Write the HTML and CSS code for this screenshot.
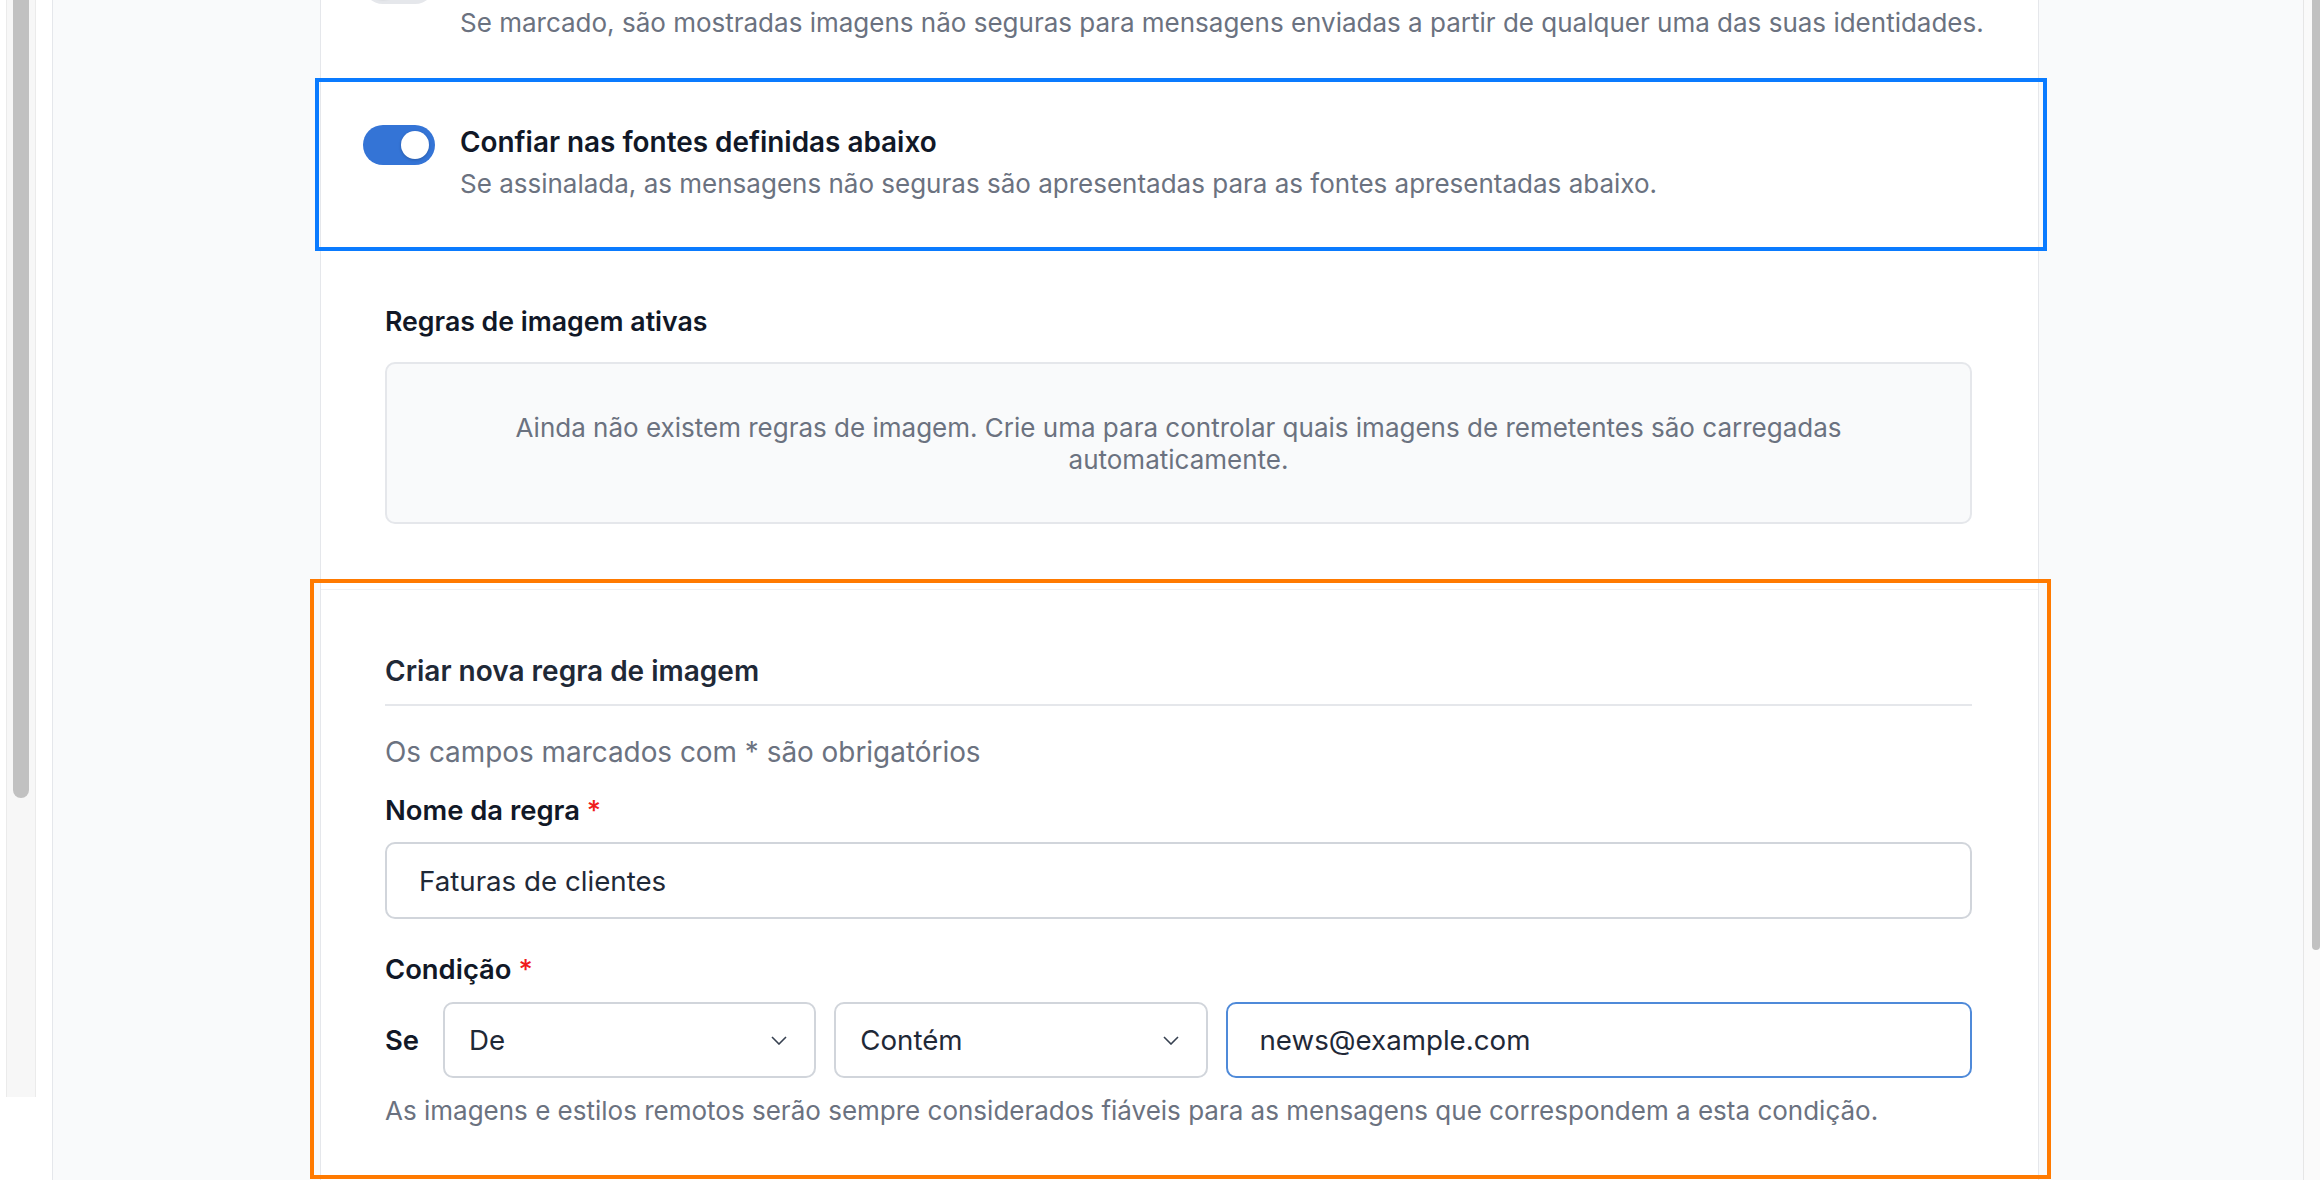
FILE: index.html
```html
<!DOCTYPE html>
<html lang="pt">
<head>
<meta charset="utf-8">
<title>Definições de imagens</title>
<link rel="stylesheet" href="styles.css">
</head>
<body>
<div class="screen">
  <div class="gutter"><div class="track"><div class="thumb"></div></div></div>
  <div class="sidebar"></div>
  <main class="panel">
    <div class="scroll">
      <section class="toggles">
        <div class="toggle-row">
          <span class="switch off"><span class="knob"></span></span>
          <div class="toggle-text">
            <div class="toggle-title">Confiar nas minhas identidades</div>
            <p class="toggle-desc">Se marcado, são mostradas imagens não seguras para mensagens enviadas a partir de qualquer uma das suas identidades.</p>
          </div>
        </div>
        <div class="toggle-row frame-blue">
          <span class="switch"><span class="knob"></span></span>
          <div class="toggle-text">
            <div class="toggle-title">Confiar nas fontes definidas abaixo</div>
            <p class="toggle-desc">Se assinalada, as mensagens não seguras são apresentadas para as fontes apresentadas abaixo.</p>
          </div>
        </div>
      </section>

      <section class="rules">
        <h2 class="section-title">Regras de imagem ativas</h2>
        <div class="empty">Ainda não existem regras de imagem. Crie uma para controlar quais imagens de remetentes são carregadas automaticamente.</div>
      </section>

      <section class="new-rule frame-orange">
        <h3 class="form-title">Criar nova regra de imagem</h3>
        <p class="required-note">Os campos marcados com * são obrigatórios</p>
        <div class="field-label">Nome da regra <span class="req">*</span></div>
        <div class="text-input">Faturas de clientes</div>
        <div class="field-label label-gap">Condição <span class="req">*</span></div>
        <div class="condition-row">
          <span class="cond-if">Se</span>
          <div class="select"><span>De</span><svg class="chev" viewBox="0 0 16 9" width="16" height="9"><path d="M1 1 L8 8 L15 1"/></svg></div>
          <div class="select"><span>Contém</span><svg class="chev" viewBox="0 0 16 9" width="16" height="9"><path d="M1 1 L8 8 L15 1"/></svg></div>
          <div class="text-input value-input">news@example.com</div>
        </div>
        <p class="helper">As imagens e estilos remotos serão sempre considerados fiáveis para as mensagens que correspondem a esta condição.</p>
      </section>
    </div>
  </main>
  <div class="aside"></div>
  <div class="vscroll"><div class="vthumb"></div></div>
</div>
</body>
</html>
```

FILE: styles.css
```css
* { box-sizing: border-box; margin: 0; padding: 0; }

body {
  width: 2320px;
  height: 1180px;
  overflow: hidden;
  background: #fff;
  font-family: Inter, "Noto Sans", sans-serif;
  color: #111827;
}

.screen { display: flex; height: 1180px; }

/* left window strip with its own scrollbar */
.gutter { width: 52px; flex: none; padding-left: 6px; }
.track {
  width: 30px;
  height: 1097px;
  background: #f7f7f7;
  border-left: 1px solid #ebebeb;
  border-right: 1px solid #ebebeb;
  overflow: hidden;
}
.thumb {
  width: 16px;
  height: 808px;
  margin: -10px auto 0;
  border-radius: 8px;
  background: #c1c1c1;
}

.sidebar {
  width: 268px;
  flex: none;
  border-left: 1px solid #e5e7eb;
  background: #f9fafb;
}

.panel {
  width: 1719px;
  flex: none;
  border-left: 1px solid #e5e7eb;
  border-right: 1px solid #e5e7eb;
  background: #fff;
}

.aside { width: 264px; flex: none; background: #f9fafb; }

.vscroll {
  flex: 1;
  border-left: 1px solid #e6e6e6;
  background: #fafafa;
  padding-left: 8px;
}
.vthumb {
  height: 960px;
  margin-top: -10px;
  border-radius: 0 0 6px 6px;
  background: #c1c1c1;
}

/* content is scrolled part way down */
.scroll { margin-top: -79px; }

/* toggle rows */
.toggle-row {
  display: flex;
  gap: 25px;
  padding: 42px;
  position: relative;
}
.toggle-row + .toggle-row { border-top: 1px solid #ebebeb; }

.switch {
  flex: none;
  width: 72px;
  height: 40px;
  margin-top: 1px;
  padding: 6px;
  border-radius: 20px;
  background: #3474d6;
  display: flex;
  justify-content: flex-end;
}
.switch.off { background: #e5e7eb; justify-content: flex-start; }
.knob {
  width: 28px;
  height: 28px;
  border-radius: 50%;
  background: #fff;
  box-shadow: 0 1px 3px rgba(0, 0, 0, 0.22);
}

.toggle-title { font-size: 27.9px; font-weight: 600; line-height: 36px; color: #111827; }
.toggle-desc { margin-top: 8px; font-size: 26px; line-height: 32px; color: #6b7280; }

/* annotation frames */
.frame-blue::after,
.frame-orange::after {
  content: "";
  position: absolute;
  pointer-events: none;
}
.frame-blue::after { top: -4px; left: -6px; right: -9px; bottom: -9px; border: 4px solid #0a7bff; }
.frame-orange::after { top: -11px; left: -11px; right: -13px; bottom: -4px; border: 4px solid #ff7a00; }

/* active rules */
.rules { padding: 61px 66px 65px 64px; }
.section-title { font-size: 26.7px; font-weight: 600; line-height: 36px; color: #111827; margin-bottom: 23px; }
.empty {
  border: 2px solid #e5e7eb;
  border-radius: 10px;
  background: #f9fafb;
  padding: 48px 48px 46px;
  text-align: center;
  font-size: 26px;
  line-height: 32px;
  color: #6b7280;
}

/* new rule form */
.new-rule {
  position: relative;
  border-top: 1px solid #f0f1f3;
  padding: 63px 66px 48px 64px;
}
.form-title {
  font-size: 28px;
  font-weight: 600;
  line-height: 36px;
  color: #1f2937;
  padding-bottom: 15px;
  border-bottom: 2px solid #e5e7eb;
}
.required-note { margin-top: 28px; font-size: 27.9px; line-height: 36px; color: #6b7280; }
.field-label { margin-top: 22px; font-size: 27.4px; font-weight: 600; line-height: 36px; color: #111827; }
.label-gap { margin-top: 32px; }
.req { color: #ef1c1c; font-weight: 500; }

.text-input {
  margin-top: 14px;
  height: 77px;
  border: 2px solid #d1d5db;
  border-radius: 10px;
  padding: 0 32px;
  display: flex;
  align-items: center;
  font-size: 27.7px;
  color: #1f2937;
}

.condition-row {
  margin-top: 15px;
  display: grid;
  grid-template-columns: 40px 1fr 1fr 2fr;
  align-items: center;
  gap: 18px;
  height: 76px;
}
.cond-if { font-size: 27.4px; font-weight: 600; color: #111827; }
.select {
  height: 76px;
  border: 2px solid #d1d5db;
  border-radius: 10px;
  padding: 0 27px 0 24px;
  display: flex;
  align-items: center;
  justify-content: space-between;
  font-size: 27.7px;
  color: #1f2937;
}
.chev { fill: none; stroke: #374151; stroke-width: 1.6; }
.value-input { margin-top: 0; height: 76px; border-color: #4f8ad9; }

.helper { margin-top: 17px; font-size: 26px; line-height: 32px; color: #6b7280; }
```
